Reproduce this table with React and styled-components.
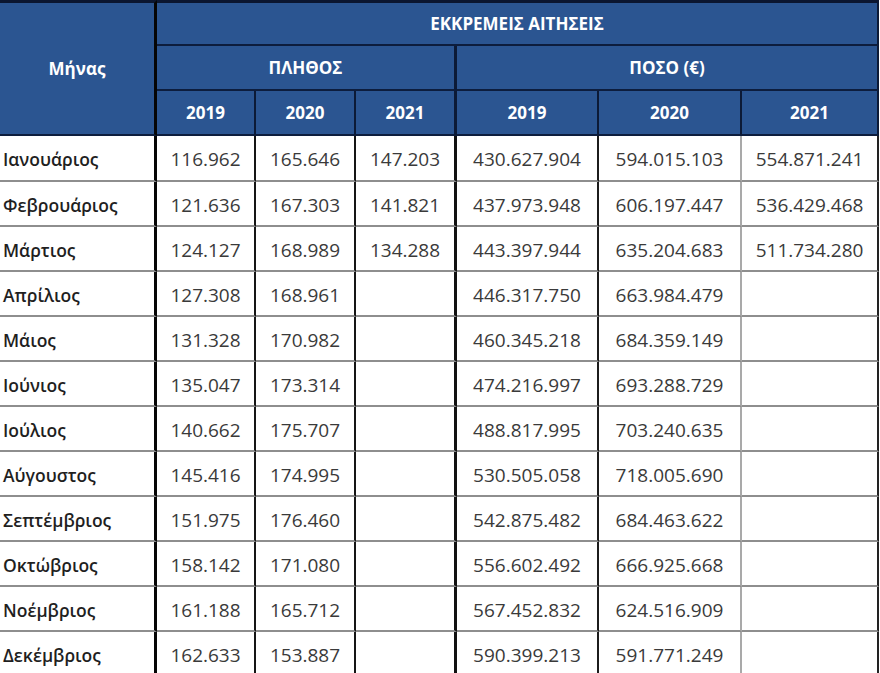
import styled, { createGlobalStyle } from 'styled-components'

const GlobalStyle = createGlobalStyle`
  *, *::before, *::after { box-sizing: border-box; }
  body {
    margin: 0;
    background: #ffffff;
    font-family: "Open Sans", "Noto Sans", sans-serif;
  }
`

const months = [
  ['Ιανουάριος', '116.962', '165.646', '147.203', '430.627.904', '594.015.103', '554.871.241'],
  ['Φεβρουάριος', '121.636', '167.303', '141.821', '437.973.948', '606.197.447', '536.429.468'],
  ['Μάρτιος', '124.127', '168.989', '134.288', '443.397.944', '635.204.683', '511.734.280'],
  ['Απρίλιος', '127.308', '168.961', '', '446.317.750', '663.984.479', ''],
  ['Μάιος', '131.328', '170.982', '', '460.345.218', '684.359.149', ''],
  ['Ιούνιος', '135.047', '173.314', '', '474.216.997', '693.288.729', ''],
  ['Ιούλιος', '140.662', '175.707', '', '488.817.995', '703.240.635', ''],
  ['Αύγουστος', '145.416', '174.995', '', '530.505.058', '718.005.690', ''],
  ['Σεπτέμβριος', '151.975', '176.460', '', '542.875.482', '684.463.622', ''],
  ['Οκτώβριος', '158.142', '171.080', '', '556.602.492', '666.925.668', ''],
  ['Νοέμβριος', '161.188', '165.712', '', '567.452.832', '624.516.909', ''],
  ['Δεκέμβριος', '162.633', '153.887', '', '590.399.213', '591.771.249', ''],
]

// right border of each data column: [width, colour]
const dataEdges = [
  ['2px', '#151515'],
  ['2px', '#151515'],
  ['3px', '#111111'],
  ['2px', '#1c1c1c'],
  ['2px', '#a9a9a9'],
  ['2px', '#222222'],
]

const colWidths = [157, 99, 100, 101, 142, 143, 137]

export default function App() {
  return (
    <>
      <GlobalStyle />
      <Table>
        <colgroup>
          {colWidths.map((w, i) => (
            <col key={i} style={{ width: w }} />
          ))}
        </colgroup>
        <thead>
          <tr>
            <HeadCell rowSpan={3} $top $edge="3px" $edgeColor="#050505">Μήνας</HeadCell>
            <HeadCell colSpan={6} $top $h={46} $edge="2px">ΕΚΚΡΕΜΕΙΣ ΑΙΤΗΣΕΙΣ</HeadCell>
          </tr>
          <tr>
            <HeadCell colSpan={3} $h={45} $edge="3px">ΠΛΗΘΟΣ</HeadCell>
            <HeadCell colSpan={3} $h={45} $edge="2px">ΠΟΣΟ (€)</HeadCell>
          </tr>
          <tr>
            {['2019', '2020', '2021', '2019', '2020', '2021'].map((y, i) => (
              <HeadCell key={i} $h={45} $edge={i === 2 ? '3px' : '2px'}>{y}</HeadCell>
            ))}
          </tr>
        </thead>
        <tbody>
          {months.map(([name, ...vals], r) => (
            <Row key={name} $first={r === 0}>
              <MonthCell>{name}</MonthCell>
              {vals.map((v, i) => (
                <NumCell key={i} $edge={dataEdges[i][0]} $edgeColor={dataEdges[i][1]}>
                  {v}
                </NumCell>
              ))}
            </Row>
          ))}
        </tbody>
      </Table>
    </>
  )
}

const Table = styled.table`
  width: 879px;
  table-layout: fixed;
  border-collapse: separate;
  border-spacing: 0;
`

const HeadCell = styled.th`
  height: ${({ $h }) => ($h ? `${$h}px` : 'auto')};
  padding: 0;
  background: #2b5591;
  color: #ffffff;
  font-family: "Open Sans", "Noto Sans", sans-serif;
  font-size: 17px;
  font-weight: 700;
  text-align: center;
  vertical-align: middle;
  border-top: ${({ $top }) => ($top ? '3px solid #0b1630' : 'none')};
  border-bottom: 2px solid #0d1d3d;
  border-right: ${({ $edge }) => $edge} solid ${({ $edgeColor }) => $edgeColor || '#0c1a36'};
`

const Row = styled.tr`
  height: ${({ $first }) => ($first ? '46px' : '45px')};
`

const MonthCell = styled.td`
  padding: 2px 0 0 3px;
  font-family: "Open Sans", "Noto Sans", sans-serif;
  font-size: 17.5px;
  font-weight: 600;
  color: #1f1f1f;
  white-space: nowrap;
  border-bottom: 2px solid #8e8e8e;
  border-right: 3px solid #050505;
`

const NumCell = styled.td`
  padding: 2px 0 0;
  font-family: "Open Sans", "Noto Sans", sans-serif;
  font-size: 19px;
  font-weight: 400;
  color: #3a3a3a;
  text-align: center;
  white-space: nowrap;
  border-bottom: 2px solid #8e8e8e;
  border-right: ${({ $edge }) => $edge} solid ${({ $edgeColor }) => $edgeColor};
`
